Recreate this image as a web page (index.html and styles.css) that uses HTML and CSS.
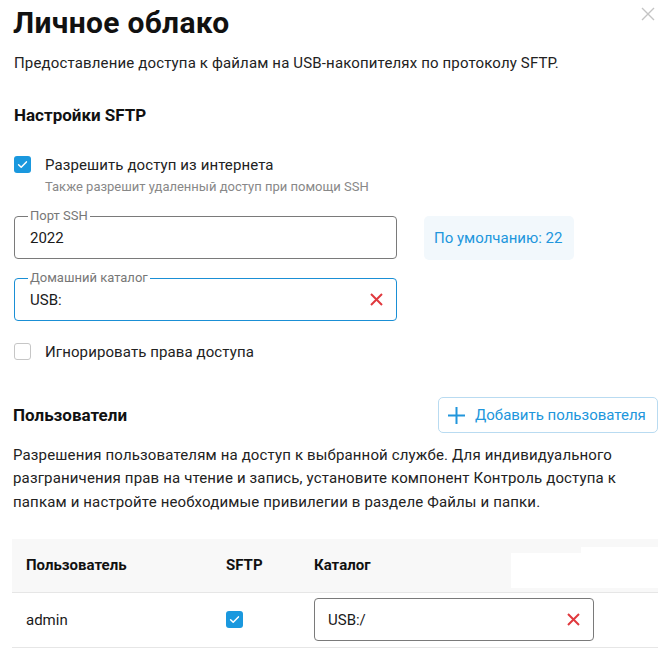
FILE: index.html
```html
<!DOCTYPE html>
<html lang="ru">
<head>
<meta charset="utf-8">
<title>Личное облако</title>
<link rel="stylesheet" href="styles.css">
</head>
<body>
<div class="page">
  <header class="head">
    <h1 class="title">Личное облако</h1>
    <button class="close" aria-label="Закрыть">
      <svg width="14" height="14" viewBox="0 0 14 14"><path d="M1 1L13 13M13 1L1 13" stroke="#c4c4c4" stroke-width="1.4" fill="none"/></svg>
    </button>
  </header>
  <p class="desc">Предоставление доступа к файлам на USB-накопителях по протоколу SFTP.</p>

  <h2 class="section-title">Настройки SFTP</h2>

  <label class="check-row first">
    <span class="cb on"><svg width="17" height="17" viewBox="0 0 17 17"><path d="M4.6 8.8l2.6 2.5 5.2-5.4" stroke="#fff" stroke-width="1.5" fill="none" stroke-linecap="round" stroke-linejoin="round"/></svg></span>
    <span class="cb-label">Разрешить доступ из интернета<span class="hint">Также разрешит удаленный доступ при помощи SSH</span></span>
  </label>

  <div class="field-row port-row">
    <div class="field">
      <span class="field-label">Порт SSH</span>
      <span class="field-value">2022</span>
    </div>
    <div class="default">По умолчанию: 22</div>
  </div>

  <div class="field-row home-row">
    <div class="field focus">
      <span class="field-label">Домашний каталог</span>
      <span class="field-value">USB:</span>
      <svg class="clear" width="13" height="13" viewBox="0 0 13 13"><path d="M1 1L12 12M12 1L1 12" stroke="#e0393e" stroke-width="2" fill="none"/></svg>
    </div>
  </div>

  <label class="check-row second">
    <span class="cb off"></span>
    <span class="cb-label">Игнорировать права доступа</span>
  </label>

  <div class="users-head">
    <h2 class="section-title users-title">Пользователи</h2>
    <button class="add">
      <svg width="17" height="17" viewBox="0 0 17 17"><path d="M8.5 0V17M0 8.5H17" stroke="#2196dc" stroke-width="2" fill="none"/></svg>
      <span>Добавить пользователя</span>
    </button>
  </div>

  <p class="users-desc">Разрешения пользователям на доступ к выбранной службе. Для индивидуального разграничения прав на чтение и запись, установите компонент Контроль доступа к папкам и настройте необходимые привилегии в разделе Файлы и папки.</p>

  <div class="table-wrap">
    <table class="users">
      <thead>
        <tr>
          <th class="c-user">Пользователь</th>
          <th class="c-sftp">SFTP</th>
          <th class="c-dir">Каталог</th>
          <th class="c-act"></th>
        </tr>
      </thead>
      <tbody>
        <tr>
          <td>admin</td>
          <td><span class="cb on small"><svg width="17" height="17" viewBox="0 0 17 17"><path d="M4.6 8.8l2.6 2.5 5.2-5.4" stroke="#fff" stroke-width="1.5" fill="none" stroke-linecap="round" stroke-linejoin="round"/></svg></span></td>
          <td>
            <div class="cell-field">
              <span class="field-value">USB:/</span>
              <svg class="clear" width="13" height="13" viewBox="0 0 13 13"><path d="M1 1L12 12M12 1L1 12" stroke="#e0393e" stroke-width="2" fill="none"/></svg>
            </div>
          </td>
          <td></td>
        </tr>
      </tbody>
    </table>
    <span class="patch patch-a"></span>
    <span class="patch patch-b"></span>
  </div>
</div>
</body>
</html>
```

FILE: styles.css
```css
* { box-sizing: border-box; }

body {
  margin: 0;
  background: #fff;
  color: #222;
  font-family: Roboto, "Noto Sans", "Liberation Sans", sans-serif;
}

.page {
  padding: 5px 10px 0 12px;
}

.head {
  display: flex;
  justify-content: space-between;
  align-items: flex-start;
}

.title {
  margin: 0 0 0 1px;
  font-size: 30px;
  line-height: 36px;
  font-weight: 700;
  letter-spacing: 0.3px;
  color: #111;
}

.close {
  display: block;
  width: 14px;
  height: 14px;
  margin: 2px 3px 0 0;
  padding: 0;
  border: 0;
  background: none;
}

.close svg { display: block; }

.desc {
  margin: 12px 0 0 2px;
  font-size: 15px;
  line-height: 20px;
  letter-spacing: 0.15px;
}

.section-title {
  margin: 31px 0 0 2px;
  font-size: 17px;
  line-height: 22px;
  font-weight: 700;
  color: #111;
}

.check-row {
  display: flex;
  align-items: flex-start;
  gap: 14px;
  margin-left: 2px;
}

.check-row.first { margin-top: 29px; }
.check-row.second { margin-top: 21px; }

.cb {
  flex: none;
  width: 17px;
  height: 17px;
  margin-top: 1px;
  border-radius: 3px;
  display: flex;
  align-items: center;
  justify-content: center;
}

.cb svg { display: block; }

.cb.on { background: #1a98de; }

.cb.off {
  border: 1px solid #c6c6c6;
  background: #fff;
}

.cb.small { margin-top: 0; }

.cb-label {
  font-size: 15px;
  line-height: 20px;
  letter-spacing: 0.1px;
}

.hint {
  display: block;
  margin-top: 3px;
  font-size: 13px;
  line-height: 18px;
  letter-spacing: 0;
  color: #888;
}

.field-row {
  display: flex;
  gap: 27px;
  margin-left: 2px;
}

.port-row { margin-top: 20px; }
.home-row { margin-top: 18px; }

.field {
  position: relative;
  width: 383px;
  height: 43px;
  border: 1px solid #7a7a7a;
  border-radius: 4px;
  display: flex;
  align-items: center;
  padding: 0 13px 0 15px;
  font-size: 15px;
}

.field.focus { border-color: #1a8fd5; }

.field-label {
  position: absolute;
  top: -9px;
  left: 13px;
  padding: 0 2px;
  background: #fff;
  font-size: 13px;
  line-height: 16px;
  color: #777;
}

.field-value { color: #1a1a1a; }

.clear {
  display: block;
  margin-left: auto;
}

.default {
  width: 150px;
  height: 44px;
  padding-left: 10px;
  border-radius: 5px;
  background: #f2f8fc;
  color: #2196dc;
  font-size: 15px;
  display: flex;
  align-items: center;
}

.users-head {
  display: flex;
  justify-content: space-between;
  align-items: center;
  margin-top: 35px;
}

.users-title { margin: 0 0 0 1px; }

.add {
  width: 220px;
  height: 36px;
  padding: 0 9px;
  border: 1px solid #b9dbf1;
  border-radius: 5px;
  background: #fff;
  display: flex;
  align-items: center;
  gap: 10px;
  color: #2196dc;
  font-family: Roboto, "Noto Sans", sans-serif;
  font-size: 15px;
}

.add svg { display: block; flex: none; }

.users-desc {
  margin: 11px 0 0 1px;
  font-size: 15px;
  line-height: 23.4px;
  letter-spacing: 0.15px;
}

.table-wrap {
  position: relative;
  margin-top: 25px;
}

.users {
  width: 646px;
  border-collapse: collapse;
  table-layout: fixed;
}

.users th {
  height: 53px;
  padding: 0 14px;
  background: #f8f8f8;
  border-bottom: 1px solid #e6e6e6;
  text-align: left;
  font-size: 15px;
  font-weight: 700;
  color: #111;
}

.c-user { width: 200px; }
.c-sftp { width: 88px; }
.c-dir { width: 308px; }
.c-act { width: 50px; }

.users td {
  height: 55px;
  padding: 0 14px;
  border-bottom: 1px solid #e6e6e6;
  font-size: 15px;
  color: #1a1a1a;
}

.cell-field {
  width: 280px;
  height: 43px;
  border: 1px solid #7a7a7a;
  border-radius: 4px;
  display: flex;
  align-items: center;
  padding: 0 13px;
}

.patch {
  position: absolute;
  background: #fff;
}

.patch-a {
  left: 499px;
  top: 14px;
  width: 70px;
  height: 35px;
}

.patch-b {
  left: 569px;
  top: 8px;
  width: 77px;
  height: 41px;
}
```
